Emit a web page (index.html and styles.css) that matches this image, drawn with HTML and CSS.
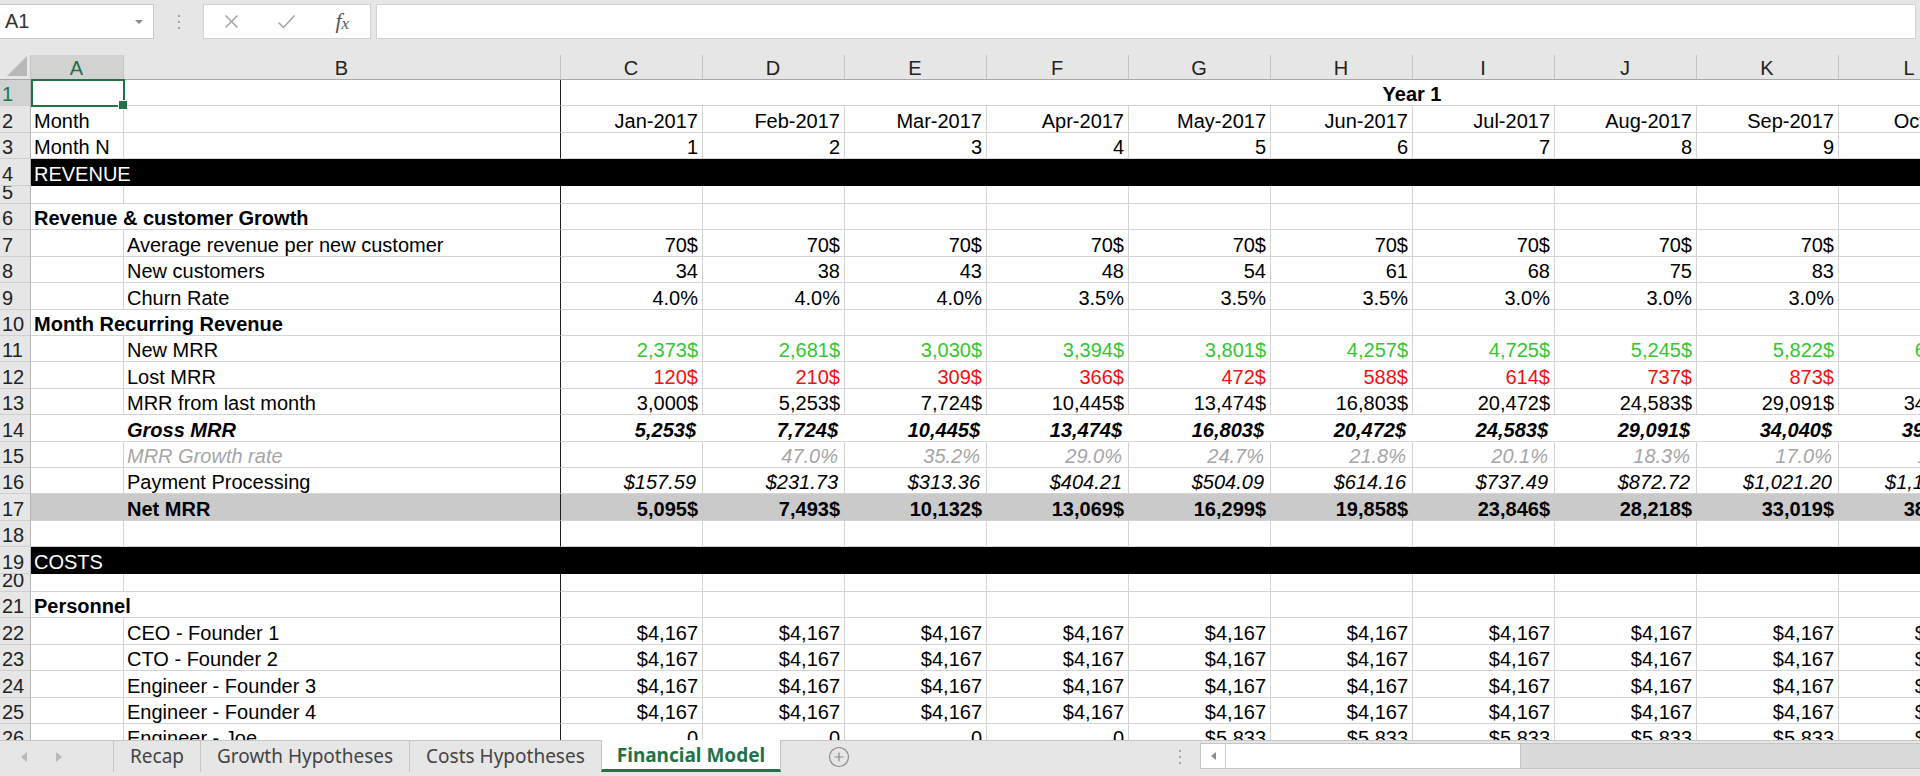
FILE: index.html
```html
<!DOCTYPE html>
<html lang="en">
<head>
  <meta charset="UTF-8">
  <title>Financial Model - Excel</title>
  <link rel="stylesheet" href="styles.css">
</head>
<body>
  <div class="excel">
    <div class="formula-bar">
      <div class="name-box"><span>A1</span><span class="caret"></span></div>
      <div class="grip"><i></i><i></i><i></i></div>
      <div class="fx-tools">
        <span class="tool">
          <svg width="15" height="15" viewBox="0 0 15 15"><path d="M1.5 1.5L13.5 13.5M13.5 1.5L1.5 13.5" stroke="#a3a3a3" stroke-width="1.5"/></svg>
        </span>
        <span class="tool">
          <svg width="19" height="16" viewBox="0 0 19 16"><path d="M1.5 8.5L6.5 13.5L17.5 1.5" fill="none" stroke="#a3a3a3" stroke-width="1.5"/></svg>
        </span>
        <span class="tool fx">f<span>x</span></span>
      </div>
      <div class="formula-input"></div>
    </div>

    <div class="sheet" id="sheet"></div>

    <div class="tabbar">
      <div class="tab-area">
        <div class="nav"><span class="arrow left"></span><span class="arrow right"></span></div>
        <div class="tab">Recap</div>
        <div class="tab">Growth Hypotheses</div>
        <div class="tab">Costs Hypotheses</div>
        <div class="tab active">Financial Model</div>
        <div class="add-sheet">
          <svg width="22" height="22" viewBox="0 0 22 22"><circle cx="11" cy="11" r="9.5" fill="none" stroke="#8c8c8c" stroke-width="1.2"/><path d="M11 6.5V15.5M6.5 11H15.5" stroke="#8c8c8c" stroke-width="1.2"/></svg>
        </div>
      </div>
      <div class="grip"><i></i><i></i><i></i></div>
      <div class="hscroll">
        <div class="scroll-btn"><span class="arrow left small"></span></div>
        <div class="thumb"></div>
      </div>
    </div>
  </div>

  <script>
    const sheet = document.getElementById('sheet');
    const letters = ['A','B','C','D','E','F','G','H','I','J','K','L'];
    const months = ['Jan','Feb','Mar','Apr','May','Jun','Jul','Aug','Sep','Oct'].map(m => m + '-2017');
    const salary = Array(10).fill('$4,167');

    const rows = [
      { n: 1, year: 'Year 1' },
      { n: 2, a: 'Month', vals: months },
      { n: 3, a: 'Month N', vals: [1,2,3,4,5,6,7,8,9,10] },
      { n: 4, band: 'REVENUE' },
      { n: 5, size: 'short' },
      { n: 6, title: 'Revenue & customer Growth' },
      { n: 7, b: 'Average revenue per new customer', vals: Array(10).fill('70$') },
      { n: 8, b: 'New customers', vals: [34,38,43,48,54,61,68,75,83,92] },
      { n: 9, b: 'Churn Rate', vals: ['4.0%','4.0%','4.0%','3.5%','3.5%','3.5%','3.0%','3.0%','3.0%','3.0%'] },
      { n: 10, title: 'Month Recurring Revenue' },
      { n: 11, b: 'New MRR', style: 'green',
        vals: ['2,373$','2,681$','3,030$','3,394$','3,801$','4,257$','4,725$','5,245$','5,822$','6,440$'] },
      { n: 12, b: 'Lost MRR', style: 'red',
        vals: ['120$','210$','309$','366$','472$','588$','614$','737$','873$','987$'] },
      { n: 13, b: 'MRR from last month',
        vals: ['3,000$','5,253$','7,724$','10,445$','13,474$','16,803$','20,472$','24,583$','29,091$','34,040$'] },
      { n: 14, b: 'Gross MRR', label: 'bold ital', style: 'bold ital', plain: true,
        vals: ['5,253$','7,724$','10,445$','13,474$','16,803$','20,472$','24,583$','29,091$','34,040$','39,493$'] },
      { n: 15, b: 'MRR Growth rate', label: 'muted ital', style: 'muted ital',
        vals: ['','47.0%','35.2%','29.0%','24.7%','21.8%','20.1%','18.3%','17.0%','16.0%'] },
      { n: 16, b: 'Payment Processing', style: 'ital',
        vals: ['$157.59','$231.73','$313.36','$404.21','$504.09','$614.16','$737.49','$872.72','$1,021.20','$1,184.79'] },
      { n: 17, b: 'Net MRR', label: 'bold', style: 'bold', fill: true,
        vals: ['5,095$','7,493$','10,132$','13,069$','16,299$','19,858$','23,846$','28,218$','33,019$','38,308$'] },
      { n: 18 },
      { n: 19, band: 'COSTS' },
      { n: 20, size: 'short' },
      { n: 21, title: 'Personnel' },
      { n: 22, b: 'CEO - Founder 1', vals: salary },
      { n: 23, b: 'CTO - Founder 2', vals: salary },
      { n: 24, b: 'Engineer - Founder 3', vals: salary },
      { n: 25, b: 'Engineer - Founder 4', vals: salary },
      { n: 26, b: 'Engineer - Joe', vals: ['0','0','0','0','$5,833','$5,833','$5,833','$5,833','$5,833','$5,833'] }
    ];

    function cell(cls, text) {
      const el = document.createElement('div');
      el.className = 'cell ' + cls;
      if (text !== undefined) el.textContent = text;
      return el;
    }

    // column letters
    const head = document.createElement('div');
    head.className = 'row col-heads';
    head.append(cell('corner'));
    letters.forEach(l => head.append(cell('col-head' + (l === 'A' ? ' selected' : ''), l)));
    sheet.append(head);

    rows.forEach(r => {
      const row = document.createElement('div');
      row.className = 'row' + (r.size ? ' ' + r.size : '') + (r.fill ? ' fill' : '') + (r.plain ? ' plain' : '');
      row.append(cell('row-head' + (r.n === 1 ? ' selected' : ''), r.n));

      if (r.band) {
        row.append(cell('band', r.band));
        sheet.append(row);
        return;
      }

      if (r.title) {
        row.append(cell('title', r.title));
      } else {
        row.append(cell('col-a' + (r.n === 1 ? ' active' : ''), r.a));
        row.append(cell('col-b ' + (r.label || ''), r.b));
      }

      if (r.year) {
        row.append(cell('year', r.year));
      } else {
        for (let i = 0; i < 10; i++) {
          row.append(cell('num ' + (r.style || ''), r.vals ? r.vals[i] : ''));
        }
      }
      sheet.append(row);
    });
  </script>
</body>
</html>
```

FILE: styles.css
```css
* { box-sizing: border-box; }
body {
  margin: 0;
  width: 1920px;
  height: 776px;
  overflow: hidden;
  background: #fff;
  color: #000;
  font-family: "Liberation Sans", Arial, sans-serif;
}
.excel {
  display: flex;
  flex-direction: column;
  height: 776px;
}

/* formula bar */
.formula-bar {
  height: 55px;
  flex: none;
  display: flex;
  align-items: flex-start;
  padding: 4px 4px 0 0;
  background: #e6e6e6;
}
.name-box {
  width: 154px;
  height: 35px;
  display: flex;
  align-items: center;
  justify-content: space-between;
  padding: 0 10px 0 5px;
  background: #fff;
  border: 1px solid #c8c8c8;
  border-left: 0;
  font-size: 20px;
  color: #333;
}
.caret {
  width: 0;
  height: 0;
  border-left: 4px solid transparent;
  border-right: 4px solid transparent;
  border-top: 4px solid #8a8a8a;
}
.grip {
  width: 49px;
  height: 35px;
  display: flex;
  flex-direction: column;
  align-items: center;
  justify-content: center;
  gap: 4px;
}
.grip i {
  width: 2px;
  height: 2px;
  background: #a5a5a5;
}
.fx-tools {
  width: 168px;
  height: 35px;
  display: flex;
  background: #fff;
  border: 1px solid #d2d2d2;
}
.tool {
  width: 56px;
  display: flex;
  align-items: center;
  justify-content: center;
}
.fx {
  font-family: "Liberation Serif", serif;
  font-style: italic;
  font-size: 22px;
  color: #555;
  padding-bottom: 2px;
}
.fx span {
  font-size: 17px;
  position: relative;
  top: 3px;
}
.formula-input {
  flex: 1;
  height: 35px;
  margin-left: 5px;
  background: #fff;
  border: 1px solid #d2d2d2;
}

/* grid */
.sheet {
  flex: 1;
  overflow: hidden;
}
.row {
  display: grid;
  grid-template-columns: 31px 93px 437px repeat(12, 142px);
  height: 26.4px;
}
.row.short { height: 18.5px; }
.row.col-heads { height: 25px; }
.cell {
  display: flex;
  align-items: flex-end;
  min-width: 0;
  padding: 0 4px 0 3px;
  border-right: 1px solid #d4d4d4;
  border-bottom: 1px solid #d4d4d4;
  font-size: 20px;
  line-height: 22px;
  white-space: nowrap;
  overflow: hidden;
}
.corner {
  justify-content: flex-end;
  padding: 0 3px 3px 0;
  background: #e6e6e6;
  border-right-color: #c4c4c4;
  border-bottom-color: #a8a8a8;
}
.corner::after {
  content: '';
  width: 0;
  height: 0;
  border-left: 20px solid transparent;
  border-bottom: 20px solid #b8b8b8;
}
.col-head {
  justify-content: center;
  background: #e6e6e6;
  color: #222;
  border-right-color: #c4c4c4;
  border-bottom-color: #a8a8a8;
}
.row-head {
  padding-left: 2px;
  background: #e6e6e6;
  color: #222;
  border-right-color: #b4b4b4;
  border-bottom-color: #cfcfcf;
}
.col-head.selected,
.row-head.selected {
  background: #d2d2d2;
  color: #217346;
}
.col-b,
.title { border-right-color: #1e1e1e; }
.title {
  grid-column: span 2;
  font-weight: bold;
}
.col-a.active {
  position: relative;
  overflow: visible;
}
.col-a.active::after {
  content: '';
  position: absolute;
  top: -1px;
  left: 0;
  right: -2px;
  bottom: -2px;
  border: 2px solid #217346;
}
.col-a.active::before {
  content: '';
  position: absolute;
  right: -5px;
  bottom: -5px;
  width: 8px;
  height: 8px;
  background: #217346;
  border: 1px solid #fff;
  z-index: 1;
}
.year {
  grid-column: span 12;
  justify-content: center;
  font-weight: bold;
}
.band {
  grid-column: 2 / -1;
  background: #000;
  color: #fff;
  border-right: 0;
  border-bottom-color: #000;
}
.num { justify-content: flex-end; }
.bold { font-weight: bold; }
.ital { font-style: italic; }
.green { color: #35c635; }
.red { color: #f41010; }
.muted { color: #a6a6a6; }
.num.ital { padding-right: 6px; }

.plain .col-a,
.plain .num { border-right-color: transparent; }

.fill .cell:not(.row-head) {
  background: #cacaca;
  border-right-color: transparent;
}
.fill .cell.col-b { border-right-color: #1e1e1e; }

/* sheet tabs */
.tabbar {
  height: 36px;
  flex: none;
  display: flex;
  align-items: flex-start;
  background: #e6e6e6;
  border-top: 1px solid #c6c6c6;
  font-family: "Noto Sans", sans-serif;
  font-size: 19px;
  color: #444;
}
.tab-area {
  width: 1168px;
  display: flex;
  align-items: flex-start;
}
.nav {
  width: 113px;
  height: 31px;
  display: flex;
  align-items: center;
  gap: 29px;
  padding-left: 21px;
}
.arrow {
  width: 0;
  height: 0;
  border-top: 5px solid transparent;
  border-bottom: 5px solid transparent;
}
.arrow.left { border-right: 6px solid #b9b9b9; }
.arrow.right { border-left: 6px solid #b9b9b9; }
.arrow.small.left { border-right-color: #8c8c8c; border-width: 4px 5px 4px 0; }
.tab {
  height: 31px;
  display: flex;
  align-items: center;
  padding: 0 16px 2px;
  border-left: 1px solid #c6c6c6;
}
.tab.active {
  height: 32px;
  margin-top: -1px;
  padding: 0 15px 0;
  background: #fff;
  color: #217346;
  font-weight: bold;
  border-right: 1px solid #c6c6c6;
  border-bottom: 3px solid #217346;
}
.add-sheet {
  height: 31px;
  display: flex;
  align-items: center;
  margin-left: 47px;
}
.tabbar .grip {
  width: 24px;
  height: 31px;
}
.hscroll {
  flex: 1;
  height: 26px;
  margin: 2px 0 0 8px;
  display: flex;
  background: #dadada;
  border: 1px solid #c6c6c6;
  border-right: 0;
}
.scroll-btn {
  width: 25px;
  display: flex;
  align-items: center;
  justify-content: center;
  background: #fff;
  border-right: 1px solid #d0d0d0;
}
.thumb {
  width: 295px;
  background: #fff;
  border-right: 1px solid #c6c6c6;
}
```
